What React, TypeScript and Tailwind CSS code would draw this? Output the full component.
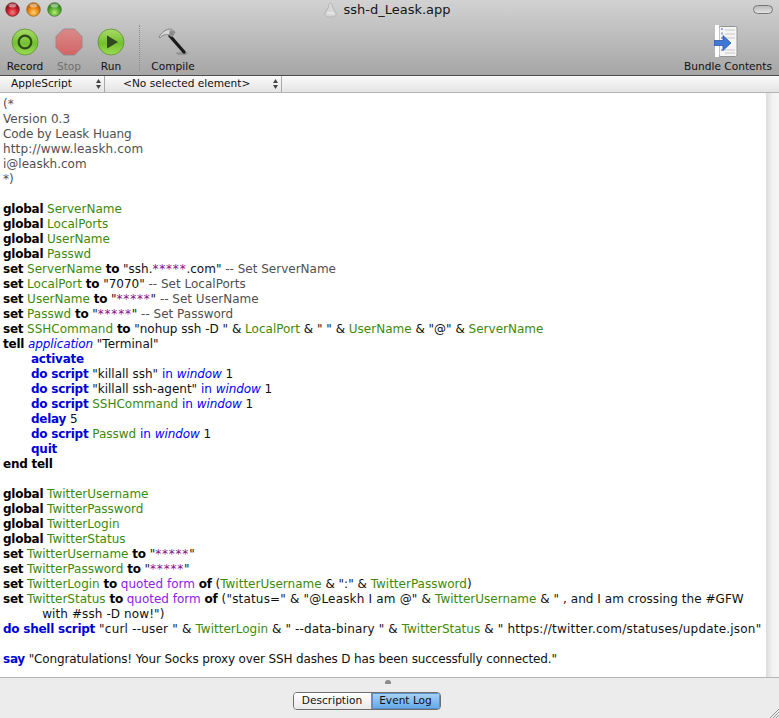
import React from 'react';

type TokenKind = 'kw' | 'cmd' | 'var' | 'txt' | 'com' | 'cls' | 'prep' | 'prop' | 'star';
type Token = [TokenKind, string, string?];

const tokenClass: Record<TokenKind, string> = {
  kw: 'font-bold text-black tracking-[-0.25px]',
  cmd: 'font-bold text-[#0000d8] tracking-[-0.25px]',
  var: 'text-[#3d8a0a]',
  txt: 'text-[#111111]',
  com: 'text-[#505050]',
  cls: 'italic text-[#0000ff] tracking-[-0.1px]',
  prep: 'text-[#0000ff]',
  prop: 'text-[#8a22e8]',
  star: 'text-[#8a0a8a] tracking-[0.8px]',
};

const stars: Token = ['star', '*****'];

const globalLine = (name: string): Token[] => [['kw', 'global'], ['txt', ' '], ['var', name]];
const doScript = (rest: Token[]): Token[] => [['cmd', 'do script'], ['txt', ' '], ...rest];
const inWindow: Token[] = [['prep', ' in '], ['cls', 'window'], ['txt', ' 1']];

const code: { indent?: boolean; tokens: Token[] }[] = [
  { tokens: [['com', '(*']] },
  { tokens: [['com', 'Version 0.3']] },
  { tokens: [['com', 'Code by Leask Huang', 'tracking-[-0.1px]']] },
  { tokens: [['com', 'http://www.leaskh.com', 'tracking-[0.15px]']] },
  { tokens: [['com', 'i@leaskh.com']] },
  { tokens: [['com', '*)']] },
  { tokens: [] },
  { tokens: globalLine('ServerName') },
  { tokens: globalLine('LocalPorts') },
  { tokens: globalLine('UserName') },
  { tokens: globalLine('Passwd') },
  { tokens: [['kw', 'set'], ['txt', ' '], ['var', 'ServerName'], ['txt', ' '], ['kw', 'to'], ['txt', ' "ssh.'], stars, ['txt', '.com" '], ['com', '-- Set ServerName']] },
  { tokens: [['kw', 'set'], ['txt', ' '], ['var', 'LocalPort'], ['txt', ' '], ['kw', 'to'], ['txt', ' "7070" '], ['com', '-- Set LocalPorts']] },
  { tokens: [['kw', 'set'], ['txt', ' '], ['var', 'UserName'], ['txt', ' '], ['kw', 'to'], ['txt', ' "'], stars, ['txt', '" '], ['com', '-- Set UserName']] },
  { tokens: [['kw', 'set'], ['txt', ' '], ['var', 'Passwd'], ['txt', ' '], ['kw', 'to'], ['txt', ' "'], stars, ['txt', '" '], ['com', '-- Set Password']] },
  { tokens: [['kw', 'set'], ['txt', ' '], ['var', 'SSHCommand'], ['txt', ' '], ['kw', 'to'], ['txt', ' "nohup ssh -D " & '], ['var', 'LocalPort'], ['txt', ' & " " & '], ['var', 'UserName'], ['txt', ' & "@" & '], ['var', 'ServerName']] },
  { tokens: [['kw', 'tell'], ['txt', ' '], ['cls', 'application'], ['txt', ' "Terminal"']] },
  { indent: true, tokens: [['cmd', 'activate']] },
  { indent: true, tokens: doScript([['txt', '"killall ssh"'], ...inWindow]) },
  { indent: true, tokens: doScript([['txt', '"killall ssh-agent"'], ...inWindow]) },
  { indent: true, tokens: doScript([['var', 'SSHCommand'], ...inWindow]) },
  { indent: true, tokens: [['cmd', 'delay'], ['txt', ' 5']] },
  { indent: true, tokens: doScript([['var', 'Passwd'], ...inWindow]) },
  { indent: true, tokens: [['cmd', 'quit']] },
  { tokens: [['kw', 'end tell']] },
  { tokens: [] },
  { tokens: globalLine('TwitterUsername') },
  { tokens: globalLine('TwitterPassword') },
  { tokens: globalLine('TwitterLogin') },
  { tokens: globalLine('TwitterStatus') },
  { tokens: [['kw', 'set'], ['txt', ' '], ['var', 'TwitterUsername'], ['txt', ' '], ['kw', 'to'], ['txt', ' "'], stars, ['txt', '"']] },
  { tokens: [['kw', 'set'], ['txt', ' '], ['var', 'TwitterPassword'], ['txt', ' '], ['kw', 'to'], ['txt', ' "'], stars, ['txt', '"']] },
  { tokens: [['kw', 'set'], ['txt', ' '], ['var', 'TwitterLogin'], ['txt', ' '], ['kw', 'to'], ['txt', ' '], ['prop', 'quoted form'], ['txt', ' '], ['kw', 'of'], ['txt', ' ('], ['var', 'TwitterUsername'], ['txt', ' & ":" & '], ['var', 'TwitterPassword'], ['txt', ')']] },
  { tokens: [['kw', 'set'], ['txt', ' '], ['var', 'TwitterStatus'], ['txt', ' '], ['kw', 'to'], ['txt', ' '], ['prop', 'quoted form'], ['txt', ' '], ['kw', 'of'], ['txt', ' ("status=" & "@Leaskh I am @" & ', 'tracking-[0.18px]'], ['var', 'TwitterUsername'], ['txt', ' & " , and I am crossing the #GFW', 'tracking-[0.05px]']] },
  { tokens: [['txt', '          with #ssh -D now!")', 'tracking-[0.1px]']] },
  { tokens: [['cmd', 'do shell script'], ['txt', ' "curl --user " & ', 'tracking-[0.2px]'], ['var', 'TwitterLogin'], ['txt', ' & " --data-binary " & ', 'tracking-[0.13px]'], ['var', 'TwitterStatus'], ['txt', ' & " https://twitter.com/statuses/update.json"', 'tracking-[0.2px]']] },
  { tokens: [] },
  { tokens: [['cmd', 'say'], ['txt', ' "Congratulations! Your Socks proxy over SSH dashes D has been successfully connected."', 'tracking-[-0.14px]']] },
];

const Light = ({ id, from, mid, to, ring }: { id: string; from: string; mid: string; to: string; ring: string }) => (
  <svg width="15" height="15" viewBox="0 0 15 15">
    <defs>
      <radialGradient id={id} cx="50%" cy="72%" r="62%">
        <stop offset="0%" stopColor={from} />
        <stop offset="55%" stopColor={mid} />
        <stop offset="100%" stopColor={to} />
      </radialGradient>
    </defs>
    <circle cx="7.5" cy="7.5" r="6.8" fill={`url(#${id})`} stroke={ring} strokeWidth="0.8" />
    <ellipse cx="7.5" cy="3.6" rx="3.8" ry="2" fill="#ffffff" opacity="0.45" />
  </svg>
);

const RecordIcon = () => (
  <svg width="28" height="28" viewBox="0 0 28 28">
    <defs>
      <linearGradient id="greenA" x1="0" y1="0" x2="0" y2="1">
        <stop offset="0%" stopColor="#a9dc68" />
        <stop offset="55%" stopColor="#75c02f" />
        <stop offset="100%" stopColor="#9bdc55" />
      </linearGradient>
    </defs>
    <circle cx="14" cy="14" r="13" fill="url(#greenA)" stroke="#5d8f33" strokeWidth="0.8" />
    <circle cx="14" cy="14" r="6.3" fill="none" stroke="#2c4a1c" strokeWidth="2.2" />
  </svg>
);

const StopIcon = () => (
  <svg width="28" height="28" viewBox="0 0 28 28">
    <defs>
      <linearGradient id="redA" x1="0" y1="0" x2="0" y2="1">
        <stop offset="0%" stopColor="#d98a8a" />
        <stop offset="100%" stopColor="#d56466" />
      </linearGradient>
    </defs>
    <polygon points="8.5,1 19.5,1 27,8.5 27,19.5 19.5,27 8.5,27 1,19.5 1,8.5" fill="url(#redA)" stroke="#948686" strokeWidth="0.9" />
  </svg>
);

const RunIcon = () => (
  <svg width="28" height="28" viewBox="0 0 28 28">
    <defs>
      <linearGradient id="greenB" x1="0" y1="0" x2="0" y2="1">
        <stop offset="0%" stopColor="#a9dc68" />
        <stop offset="55%" stopColor="#75c02f" />
        <stop offset="100%" stopColor="#9bdc55" />
      </linearGradient>
    </defs>
    <circle cx="14" cy="14" r="13" fill="url(#greenB)" stroke="#5d8f33" strokeWidth="0.8" />
    <polygon points="10,7.5 21,14 10,20.5" fill="#2f4a20" />
  </svg>
);

const HammerIcon = () => (
  <svg width="32" height="30" viewBox="0 0 32 30">
    <ellipse cx="25" cy="26.5" rx="6" ry="1.6" fill="#777777" opacity="0.5" />
    <line x1="13" y1="9" x2="27" y2="25" stroke="#1a1a1a" strokeWidth="3.4" strokeLinecap="round" />
    <path d="M2 10 C5 5 9 2 14 2 L18 5 L15 10 L12 8 C9 7 5 8 3 11 Z" fill="#d4d4d4" stroke="#6a6a6a" strokeWidth="0.7" />
    <path d="M13 3 L18 5 L15 10 L12 8 Z" fill="#8c8c8c" />
  </svg>
);

const BundleIcon = () => (
  <svg width="24" height="34" viewBox="0 0 24 34" className="mr-[4px]">
    <rect x="5" y="1.5" width="18" height="30" rx="1.5" fill="#f5f5f5" stroke="#8c8c8c" strokeWidth="0.9" />
    <rect x="1" y="0" width="4" height="32" fill="#ffffff" />
    <g stroke="#b6b6b6" strokeWidth="0.7">
      <line x1="11" y1="5" x2="21" y2="5" />
      <line x1="11" y1="9" x2="21" y2="9" />
      <line x1="11" y1="13" x2="21" y2="13" />
      <line x1="11" y1="25" x2="21" y2="25" />
      <line x1="11" y1="28" x2="21" y2="28" />
    </g>
    <g fill="#9fa6dc">
      <rect x="7" y="3" width="2" height="2" />
      <rect x="7" y="7.5" width="2" height="2" />
      <rect x="7" y="12" width="2" height="2" />
      <rect x="7" y="24" width="2" height="2" />
    </g>
    <path d="M0 15.5 H9 V10.5 L17 18 L9 25.5 V20.5 H0 Z" fill="#3f78d8" stroke="#1f4aa0" strokeWidth="0.7" />
  </svg>
);

const ScriptIcon = () => (
  <svg width="15" height="16" viewBox="0 0 15 16">
    <path d="M7.5 1 C6 1 5.5 3 5.5 5 L2 11 C1 13 3 15 7.5 15 C12 15 14 13 13 11 L9.5 5 C9.5 3 9 1 7.5 1 Z" fill="#d6d6d6" stroke="#a8a8a8" strokeWidth="0.7" />
    <path d="M4 11 L11 11" stroke="#eeeeee" strokeWidth="1.2" />
  </svg>
);

const UpDown = () => (
  <svg width="7" height="12" viewBox="0 0 7 12" className="shrink-0">
    <polygon points="3.5,1 6,5 1,5" fill="#444444" />
    <polygon points="3.5,11 6,7 1,7" fill="#444444" />
  </svg>
);

const ToolButton = ({ icon, label, className, muted }: { icon: React.ReactNode; label: string; className: string; muted?: boolean }) => (
  <div className={`flex flex-col items-center ${className}`}>
    <div className="h-[34px] flex items-center justify-center">{icon}</div>
    <span className={`text-[10.6px] leading-[14px] whitespace-nowrap ${muted ? 'text-[#6f6f6f]' : 'text-[#111111]'}`}>{label}</span>
  </div>
);

export default function App() {
  return (
    <div className="w-[779px] h-[718px] flex flex-col overflow-hidden relative bg-white font-['DejaVu_Sans',sans-serif]">
      {/* title bar + toolbar */}
      <div className="h-[76px] shrink-0 flex flex-col bg-gradient-to-b from-[#d2d2d2] to-[#a6a6a6] border-b border-[#4d4d4d]">
        <div className="h-[19px] flex items-center relative">
          <div className="flex gap-[6px] pl-[5px]">
            <Light id="lightRed" from="#f08080" mid="#d02030" to="#80101a" ring="#7a2a2a" />
            <Light id="lightYellow" from="#ffd27a" mid="#ee8a14" to="#b85a08" ring="#9c6a22" />
            <Light id="lightGreen" from="#b8ec7a" mid="#5cb030" to="#2c7a18" ring="#467a30" />
          </div>
          <div className="flex-1 flex justify-center items-center gap-[5px] pl-[2px] pr-[43px]">
            <ScriptIcon />
            <span className="text-[13px] leading-[16px] text-[#151515]">ssh-d_Leask.app</span>
          </div>
          <div className="w-[20px] h-[9px] rounded-full border border-[#777777] bg-gradient-to-b from-[#bbbbbb] to-[#e2e2e2] mr-[6px]" />
        </div>
        <div className="flex-1 flex items-start pt-[6px] pl-[3px] pr-[7px]">
          <ToolButton icon={<RecordIcon />} label="Record" className="w-[44px]" />
          <ToolButton icon={<StopIcon />} label="Stop" className="w-[44px]" muted />
          <ToolButton icon={<RunIcon />} label="Run" className="w-[40px]" />
          <div className="w-0 h-[46px] ml-[8px] border-l border-dotted border-[#8a8a8a]" />
          <ToolButton icon={<HammerIcon />} label="Compile" className="w-[60px] ml-[3px]" />
          <ToolButton icon={<BundleIcon />} label="Bundle Contents" className="ml-auto" />
        </div>
      </div>

      {/* navigation bar */}
      <div className="h-[16px] shrink-0 flex items-center bg-gradient-to-b from-[#fafafa] to-[#e4e4e4] border-b border-[#b4b4b4] text-[10.6px] text-[#111111] box-content">
        <div className="w-[105px] h-full flex items-center justify-between pl-[11px] pr-[2px] border-r border-[#a8a8a8]">
          <span>AppleScript</span>
          <UpDown />
        </div>
        <div className="w-[177px] h-full flex items-center justify-between pl-[18px] pr-[2px] border-r border-[#a8a8a8]">
          <span>&lt;No selected element&gt;</span>
          <UpDown />
        </div>
      </div>

      {/* editor */}
      <div className="flex-1 min-h-0 flex">
        <div className="flex-1 pt-[4px] pl-[3px] text-[12px] leading-[15px] overflow-hidden">
          {code.map((line, i) => (
            <div key={i} className={`h-[15px] whitespace-pre ${line.indent ? 'pl-[28px]' : ''}`}>
              {line.tokens.map((t, j) => (
                <span key={j} className={`${tokenClass[t[0]]} ${t[2] ?? ''}`}>{t[1]}</span>
              ))}
            </div>
          ))}
        </div>
        <div className="w-[13px] shrink-0 bg-gradient-to-r from-[#dcdcdc] via-[#f2f2f2] to-[#f6f6f6]" />
      </div>

      {/* bottom tabs */}
      <div className="h-[41px] shrink-0 bg-[#ececec] border-t border-[#b4b4b4] relative flex justify-center pt-[14px]">
        <div className="absolute top-[2px] left-[385px] w-[6px] h-[4px] rounded-t-full bg-[#8a8a8a]" />
        <div className="flex h-[18px] text-[10.6px] text-[#111111] rounded-[4px] overflow-hidden border border-[#6f6f6f] mr-[46px]">
          <div className="w-[78px] flex items-center justify-center bg-gradient-to-b from-[#ffffff] to-[#e9e9e9] border-r border-[#8a8a8a]">Description</div>
          <div className="w-[68px] flex items-center justify-center bg-gradient-to-b from-[#a9d3f6] to-[#5fa8ea] shadow-[inset_0_0_0_1px_#5f8fc8]">Event Log</div>
        </div>
        <svg width="10" height="10" viewBox="0 0 10 10" className="absolute right-0 bottom-0">
          <g stroke="#8c8c8c" strokeWidth="0.9">
            <line x1="1" y1="10" x2="10" y2="1" />
            <line x1="4" y1="10" x2="10" y2="4" />
            <line x1="7" y1="10" x2="10" y2="7" />
          </g>
        </svg>
      </div>
    </div>
  );
}
